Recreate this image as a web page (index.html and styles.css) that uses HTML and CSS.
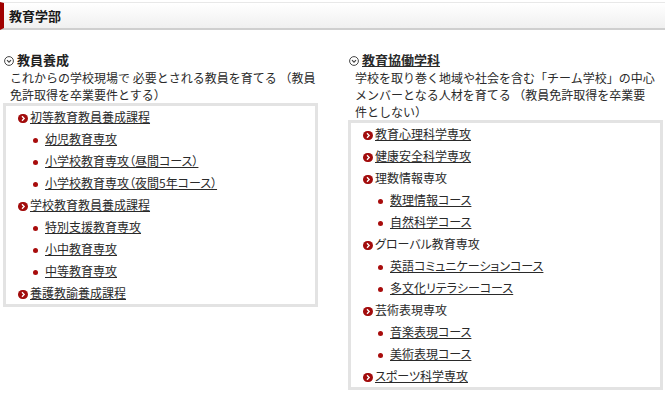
FILE: index.html
```html
<!DOCTYPE html>
<html lang="ja">
<head>
    <meta charset="UTF-8">
    <meta name="viewport" content="width=device-width, initial-scale=1.0">
    <title>教育学部</title>
    <link rel="stylesheet" href="styles.css">
</head>
<body>

<h2 class="page-title">教育学部</h2>

<div class="columns">
    <!-- 教員養成 -->
    <section class="col">
        <h3 class="col-head">
            <svg class="head-ico" width="10" height="10" viewBox="0 0 10 10"><circle cx="5" cy="5" r="4.4" fill="none" stroke="#444" stroke-width="1"/><path d="M3 4.2l2 2 2-2" fill="none" stroke="#444" stroke-width="1.2"/></svg>教員養成
        </h3>
        <p class="desc">これからの学校現場で 必要とされる教員を育てる （教員免許取得を卒業要件とする）</p>
        <ul class="course-list">
            <li class="course">
                <svg class="arrow" width="10" height="9" viewBox="0 0 10 9"><rect width="10" height="9" rx="4.5" fill="#a20c0c"/><path d="M4 2.2l2.2 2.3L4 6.8" fill="none" stroke="#fff" stroke-width="1.3"/></svg><a href="#">初等教育教員養成課程</a>
                <ul class="sub-list">
                    <li><a href="#">幼児教育専攻</a></li>
                    <li><a href="#">小学校教育専攻（昼間コース）</a></li>
                    <li><a href="#">小学校教育専攻（夜間5年コース）</a></li>
                </ul>
            </li>
            <li class="course">
                <svg class="arrow" width="10" height="9" viewBox="0 0 10 9"><rect width="10" height="9" rx="4.5" fill="#a20c0c"/><path d="M4 2.2l2.2 2.3L4 6.8" fill="none" stroke="#fff" stroke-width="1.3"/></svg><a href="#">学校教育教員養成課程</a>
                <ul class="sub-list">
                    <li><a href="#">特別支援教育専攻</a></li>
                    <li><a href="#">小中教育専攻</a></li>
                    <li><a href="#">中等教育専攻</a></li>
                </ul>
            </li>
            <li class="course">
                <svg class="arrow" width="10" height="9" viewBox="0 0 10 9"><rect width="10" height="9" rx="4.5" fill="#a20c0c"/><path d="M4 2.2l2.2 2.3L4 6.8" fill="none" stroke="#fff" stroke-width="1.3"/></svg><a href="#">養護教諭養成課程</a>
            </li>
        </ul>
    </section>

    <!-- 教育協働学科 -->
    <section class="col">
        <h3 class="col-head">
            <svg class="head-ico" width="10" height="10" viewBox="0 0 10 10"><circle cx="5" cy="5" r="4.4" fill="none" stroke="#444" stroke-width="1"/><path d="M3 4.2l2 2 2-2" fill="none" stroke="#444" stroke-width="1.2"/></svg><a href="#">教育協働学科</a>
        </h3>
        <p class="desc desc-narrow">学校を取り巻く地域や社会を含む「チーム学校」の中心メンバーとなる人材を育てる （教員免許取得を卒業要件としない）</p>
        <ul class="course-list">
            <li class="course">
                <svg class="arrow" width="10" height="9" viewBox="0 0 10 9"><rect width="10" height="9" rx="4.5" fill="#a20c0c"/><path d="M4 2.2l2.2 2.3L4 6.8" fill="none" stroke="#fff" stroke-width="1.3"/></svg><a href="#">教育心理科学専攻</a>
            </li>
            <li class="course">
                <svg class="arrow" width="10" height="9" viewBox="0 0 10 9"><rect width="10" height="9" rx="4.5" fill="#a20c0c"/><path d="M4 2.2l2.2 2.3L4 6.8" fill="none" stroke="#fff" stroke-width="1.3"/></svg><a href="#">健康安全科学専攻</a>
            </li>
            <li class="course">
                <svg class="arrow" width="10" height="9" viewBox="0 0 10 9"><rect width="10" height="9" rx="4.5" fill="#a20c0c"/><path d="M4 2.2l2.2 2.3L4 6.8" fill="none" stroke="#fff" stroke-width="1.3"/></svg>理数情報専攻
                <ul class="sub-list">
                    <li><a href="#">数理情報コース</a></li>
                    <li><a href="#">自然科学コース</a></li>
                </ul>
            </li>
            <li class="course">
                <svg class="arrow" width="10" height="9" viewBox="0 0 10 9"><rect width="10" height="9" rx="4.5" fill="#a20c0c"/><path d="M4 2.2l2.2 2.3L4 6.8" fill="none" stroke="#fff" stroke-width="1.3"/></svg>グローバル教育専攻
                <ul class="sub-list">
                    <li><a href="#">英語コミュニケーションコース</a></li>
                    <li><a href="#">多文化リテラシーコース</a></li>
                </ul>
            </li>
            <li class="course">
                <svg class="arrow" width="10" height="9" viewBox="0 0 10 9"><rect width="10" height="9" rx="4.5" fill="#a20c0c"/><path d="M4 2.2l2.2 2.3L4 6.8" fill="none" stroke="#fff" stroke-width="1.3"/></svg>芸術表現専攻
                <ul class="sub-list">
                    <li><a href="#">音楽表現コース</a></li>
                    <li><a href="#">美術表現コース</a></li>
                </ul>
            </li>
            <li class="course">
                <svg class="arrow" width="10" height="9" viewBox="0 0 10 9"><rect width="10" height="9" rx="4.5" fill="#a20c0c"/><path d="M4 2.2l2.2 2.3L4 6.8" fill="none" stroke="#fff" stroke-width="1.3"/></svg><a href="#">スポーツ科学専攻</a>
            </li>
        </ul>
    </section>
</div>

</body>
</html>
```

FILE: styles.css
```css
body {
    margin: 0;
    font-family: "Noto Sans CJK JP", "DejaVu Sans", sans-serif;
    font-size: 12px;
    color: #2a2a2a;
    background: #fff;
}

a {
    color: #2a2a2a;
    text-decoration: underline;
}

/* ページ見出し */
.page-title {
    margin: 2px 0 0 0;
    height: 25px;
    line-height: 25px;
    padding-left: 5px;
    font-size: 13px;
    font-weight: bold;
    color: #1a1a1a;
    border-top: 1px solid #e8e8e8;
    border-bottom: 2px solid #cfcfcf;
    border-left: 4px solid #a00000;
    background: linear-gradient(#ffffff, #f0f0f0);
}

.columns {
    display: flex;
    gap: 30px;
    padding-left: 3px;
    margin-top: 20px;
}

.col {
    width: 315px;
}

.col-head {
    margin: 0;
    padding-left: 1px;
    font-size: 13px;
    font-weight: bold;
    line-height: 19px;
    color: #222;
}

.head-ico {
    vertical-align: -1px;
    margin-right: 3px;
}

.desc {
    margin: 0;
    padding-left: 7px;
    line-height: 17px;
}

.desc-narrow {
    max-width: 301px;
}

/* リスト枠 */
.course-list {
    list-style: none;
    margin: 0;
    padding: 0;
    border: 3px solid #e3e3e3;
    font-feature-settings: "palt";
}

.course {
    padding-left: 12px;
    line-height: 22px;
}

.arrow {
    vertical-align: -1px;
    margin-right: 2px;
}

.sub-list {
    list-style: none;
    margin: 0;
    padding: 0;
}

.sub-list li {
    padding-left: 15px;
    line-height: 22px;
}

.sub-list li::before {
    content: "";
    display: inline-block;
    width: 5px;
    height: 5px;
    border-radius: 50%;
    background: #a80c0c;
    margin-right: 7px;
    vertical-align: 1px;
}
```
